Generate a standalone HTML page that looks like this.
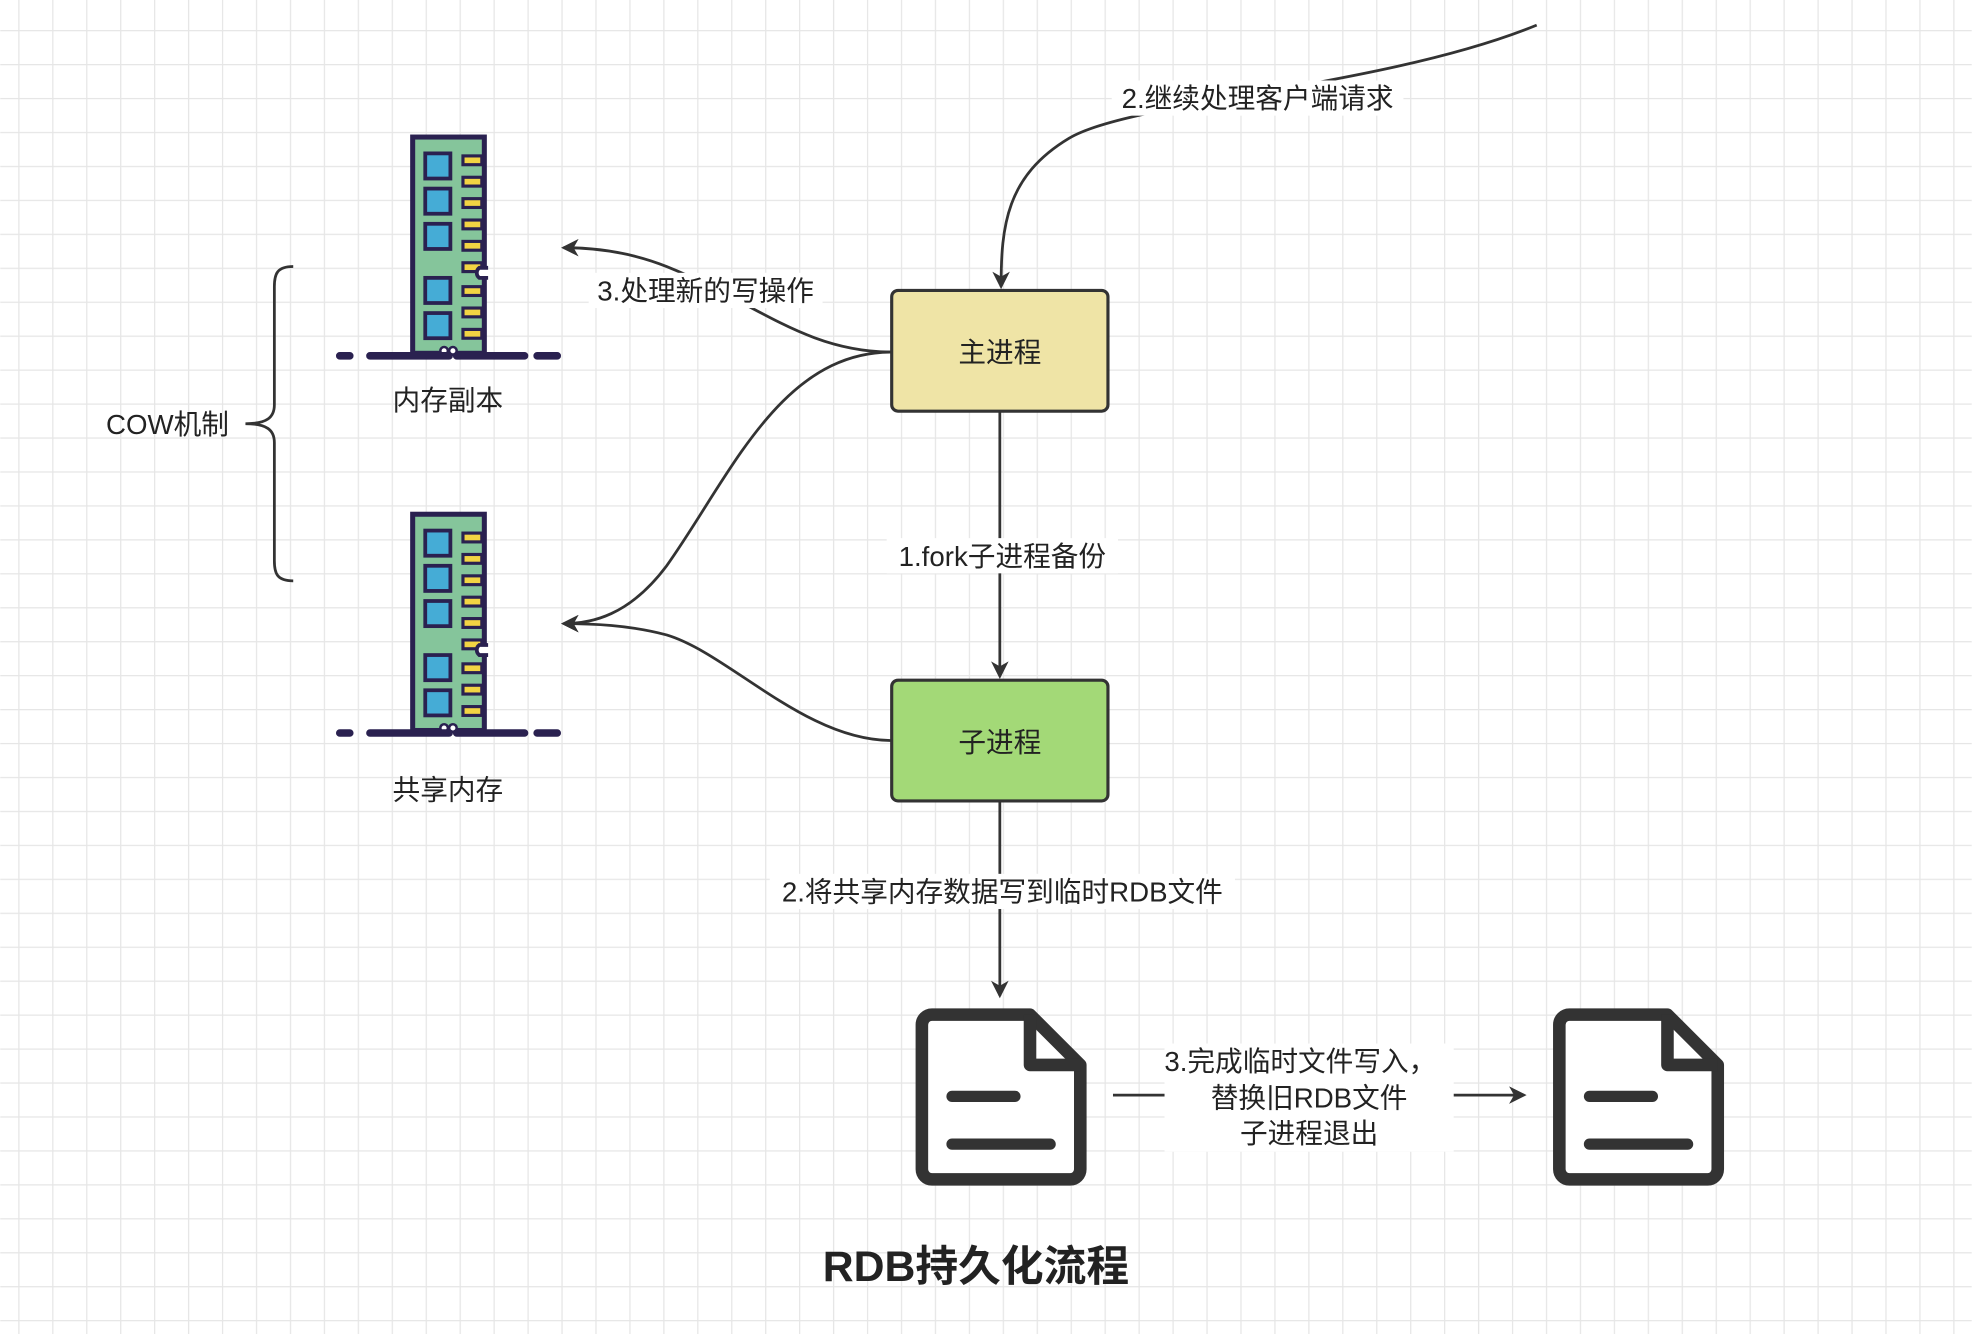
<!DOCTYPE html>
<html><head><meta charset="utf-8"><style>
html,body{margin:0;padding:0;background:#fff}
svg{display:block}
text{font-family:"Liberation Sans","Noto Sans CJK SC",sans-serif;fill:#222}
</style></head><body>
<svg width="1972" height="1334" viewBox="0 0 1568 1061" xmlns="http://www.w3.org/2000/svg">
<defs>
<pattern id="g" x="14.3" y="23.9" width="27" height="27" patternUnits="userSpaceOnUse">
<path d="M0 0H27M0 0V27" stroke="#e6e6e6" stroke-width="2" fill="none"/>
</pattern>
<marker id="ar" markerWidth="14" markerHeight="14" refX="12" refY="7" orient="auto" markerUnits="userSpaceOnUse">
<path d="M0 0L14 7L0 14L4 7Z" fill="#333"/>
</marker>
<g id="mem">
<rect x="0" y="0" width="57" height="172" fill="#85c59b" stroke="#2a2150" stroke-width="4"/>
<g fill="#45acd6" stroke="#2a2150" stroke-width="3">
<rect x="10" y="13" width="20" height="20"/><rect x="10" y="41" width="20" height="20"/><rect x="10" y="69" width="20" height="20"/>
<rect x="10" y="112" width="20" height="20"/><rect x="10" y="140" width="20" height="20"/>
</g>
<g fill="#f2d443" stroke="#2a2150" stroke-width="2.5">
<rect x="40" y="15" width="15" height="7"/><rect x="40" y="32" width="15" height="7"/><rect x="40" y="49" width="15" height="7"/><rect x="40" y="66" width="15" height="7"/><rect x="40" y="83" width="15" height="7"/><rect x="40" y="100" width="15" height="7"/>
<rect x="40" y="119" width="15" height="7"/><rect x="40" y="136" width="15" height="7"/><rect x="40" y="153" width="15" height="7"/>
</g>
<path d="M60 104 H53 a5 5 0 0 0 0 8 H60" fill="#fff" stroke="#2a2150" stroke-width="3"/>
<circle cx="25" cy="170" r="3" fill="#fff" stroke="#2a2150" stroke-width="2"/>
<circle cx="32" cy="170" r="3" fill="#fff" stroke="#2a2150" stroke-width="2"/>
<path d="M-58 174H-50M-34 174H29M35 174H89M99 174H115" stroke="#2a2150" stroke-width="6" stroke-linecap="round"/>
</g>
<g id="doc">
<path d="M14 5H92L132 45V128a8 8 0 0 1-8 8H14a8 8 0 0 1-8-8V13a8 8 0 0 1 8-8Z" fill="#fff" stroke="#333" stroke-width="10" stroke-linejoin="round"/>
<path d="M92 5V45H132" fill="none" stroke="#333" stroke-width="10" stroke-linejoin="round"/>
<path d="M30 70H80M30 108H108" stroke="#333" stroke-width="9" stroke-linecap="round"/>
</g>
</defs>
<rect width="1568" height="1061" fill="url(#g)"/>

<g fill="none" stroke="#333" stroke-width="2.2">
<path d="M1222 20 C1100 70 900 80 850 110 C800 140 796 180 796 228" marker-end="url(#ar)"/>
<path d="M709 280 C640 280 600 240 530 212 C500 200 470 197 448 197" marker-end="url(#ar)"/>
<path d="M709 280 C620 280 580 380 530 450 C500 490 470 496 448 496" marker-end="url(#ar)"/>
<path d="M709 589 C640 589 580 520 530 505 C500 497 470 496 448 496" marker-end="url(#ar)"/>
<path d="M795 327V538" marker-end="url(#ar)"/>
<path d="M795 637V792" marker-end="url(#ar)"/>
<path d="M885 871H1212" marker-end="url(#ar)"/>
<path d="M233 212 C220 212 218 218 218 228 V322 C218 332 212 337 195 337 C212 337 218 342 218 352 V446 C218 456 220 462 233 462"/>
</g>

<g fill="#fff">
<rect x="884" y="64" width="232" height="28"/>
<rect x="468" y="217" width="186" height="28"/>
<rect x="705" y="428" width="184" height="28"/>
<rect x="612" y="695" width="370" height="28"/>
<rect x="926" y="830" width="230" height="86"/>
</g>

<rect x="709" y="231" width="172" height="96" rx="5" fill="#efe4a6" stroke="#333" stroke-width="2.5"/>
<rect x="709" y="541" width="172" height="96" rx="5" fill="#a3d977" stroke="#333" stroke-width="2.5"/>

<use href="#mem" x="328" y="109"/>
<use href="#mem" x="328" y="409"/>
<use href="#doc" x="727" y="802"/>
<use href="#doc" x="1234" y="802"/>

<g font-size="22" text-anchor="middle">
<text x="795" y="288">主进程</text>
<text x="795" y="598">子进程</text>
<text x="1000" y="86">2.继续处理客户端请求</text>
<text x="561" y="239">3.处理新的写操作</text>
<text x="797" y="450">1.fork子进程备份</text>
<text x="797" y="717">2.将共享内存数据写到临时RDB文件</text>
<text x="1034" y="852">3.完成临时文件写入，</text>
<text x="1041" y="881">替换旧RDB文件</text>
<text x="1041" y="909">子进程退出</text>
<text x="356" y="326">内存副本</text>
<text x="356" y="636">共享内存</text>
<text x="133" y="345">COW机制</text>
</g>
<text x="776" y="1019" font-size="34" font-weight="bold" text-anchor="middle" fill="#333">RDB持久化流程</text>
</svg>
</body></html>
